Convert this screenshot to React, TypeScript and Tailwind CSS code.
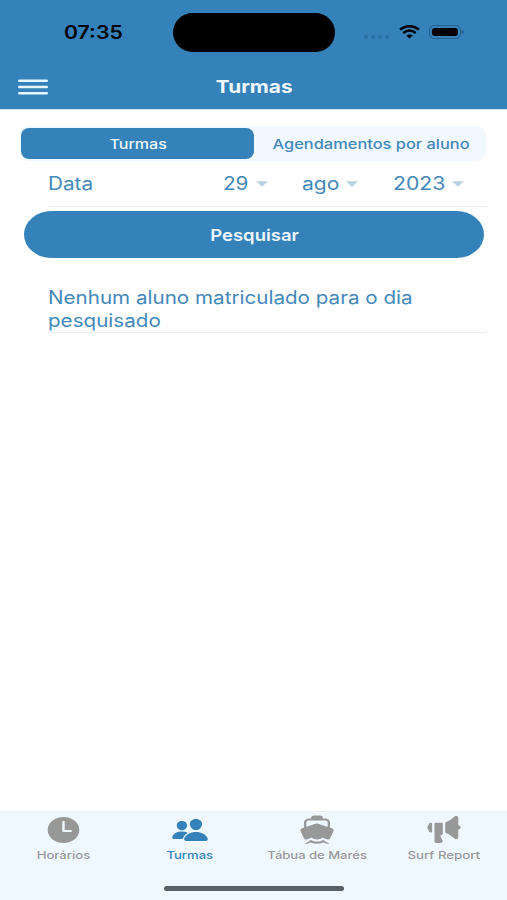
import React from "react";
import { IoBoat, IoMegaphone, IoPeople, IoTime } from "react-icons/io5";

type Tab = { label: string; icon: React.ReactNode; active?: boolean; scale: string };

const iconProps = { preserveAspectRatio: "none" };

const tabs: Tab[] = [
  { label: "Horários", scale: "scale-x-[1.25]", icon: <IoTime {...iconProps} className="h-[32px] w-[39px]" /> },
  { label: "Turmas", scale: "scale-x-[1.24]", active: true, icon: <IoPeople {...iconProps} className="h-[32px] w-[38px]" /> },
  { label: "Tábua de Marés", scale: "scale-x-[1.24]", icon: <IoBoat {...iconProps} className="ml-px h-[32px] w-[38px]" /> },
  { label: "Surf Report", scale: "scale-x-[1.26]", icon: <IoMegaphone {...iconProps} className="h-[31px] w-[38px]" /> },
];

function Caret() {
  return (
    <svg viewBox="0 0 12 6" className="h-[6px] w-[12px] shrink-0 fill-[#b8d2df]">
      <path d="M0 0.3H12L6 5.8Z" />
    </svg>
  );
}

function StatusBar() {
  return (
    <div className="flex h-[64px] items-center text-black">
      <div className="w-[173px] pt-[2px] pl-[64px] text-[18px] leading-none font-semibold">
        <span className="inline-block origin-left scale-x-[1.18]">07:35</span>
      </div>
      <div className="h-[39px] w-[162px] rounded-full bg-black" />
      <div className="flex items-center pl-[29px]">
        <div className="mt-[10px] flex gap-[3px]">
          {[0, 1, 2, 3].map((i) => (
            <i key={i} className="size-[4px] rounded-full bg-[#2a70a3]" />
          ))}
        </div>
        <svg viewBox="0 0 21 14" className="ml-[10px] h-[14px] w-[21px]" fill="none" stroke="black">
          <path d="M1 4.6Q10.500-2.400 20 4.600" strokeWidth="2.500" />
          <path d="M4.300 8Q10.500 3.200 16.700 8" strokeWidth="2.400" />
          <path d="M7.200 10.600Q10.500 8.300 13.800 10.600L10.500 13.600Z" fill="black" stroke="none" />
        </svg>
        <div className="ml-[9px] h-[14px] w-[32px] rounded-[5px] border border-[#23618e] p-[2px]">
          <div className="h-full w-full rounded-[3px] bg-black" />
        </div>
        <i className="ml-px h-[4px] w-[2px] rounded-r-full bg-[#23618e]" />
      </div>
    </div>
  );
}

export default function App() {
  return (
    <div className="flex h-[900px] w-[507px] flex-col overflow-hidden bg-white font-['Inter','Liberation_Sans',sans-serif] text-[#4488b9]">
      <header className="h-[110px] border-b border-[#c9e5f3] bg-[#3482b9]">
        <StatusBar />
        <div className="grid h-[45px] grid-cols-[48px_1fr_46px] items-center">
          <svg viewBox="0 0 30 16" className="ml-[17.500px] h-[16px] w-[30px]" stroke="#e7f5ff" strokeWidth="2.400" strokeLinecap="round">
            <path d="M1.200 1.800H28.800M1.200 8H28.800M1.200 14.200H28.800" />
          </svg>
          <h1 className="text-center text-[17.500px] leading-none font-bold text-[#eff8ff]">
            <span className="inline-block scale-x-[1.19]">Turmas</span>
          </h1>
        </div>
      </header>

      <main className="flex-1 pt-[16px]">
        <div className="mr-[21px] ml-[20px] flex h-[35px] items-center rounded-[9px] bg-[#f2f8ff] p-px text-[13.500px] font-medium">
          <div className="flex h-[31px] w-[233px] items-center justify-center rounded-[8px] bg-[#3482b9] pt-px pl-px text-[#eff8ff]">
            <span className="scale-x-[1.19]">Turmas</span>
          </div>
          <div className="flex flex-1 justify-center pt-px pl-[3px]">
            <span className="scale-x-[1.215] whitespace-nowrap">Agendamentos por aluno</span>
          </div>
        </div>

        <div className="mr-[21px] ml-[48px] flex h-[46px] items-center border-b border-[#ebedf0] text-[18px]">
          <div className="w-[175px]">
            <span className="inline-block origin-left scale-x-[1.15]">Data</span>
          </div>
          <div className="flex w-[79px] items-center">
            <span className="w-[33px]"><span className="inline-block origin-left scale-x-[1.15]">29</span></span>
            <Caret />
          </div>
          <div className="flex w-[91px] items-center">
            <span className="w-[44px]"><span className="inline-block origin-left scale-x-[1.17]">ago</span></span>
            <Caret />
          </div>
          <div className="flex items-center">
            <span className="w-[59px]"><span className="inline-block origin-left scale-x-[1.18]">2023</span></span>
            <Caret />
          </div>
        </div>

        <button className="mt-[4px] ml-[24px] flex h-[47px] w-[460px] items-center justify-center rounded-[28px/24px] bg-[#3482b9] pt-[2px] pl-px text-[16.500px] font-semibold text-[#eff8ff]">
          <span className="scale-x-[1.12]">Pesquisar</span>
        </button>

        <div className="mt-[27px] mr-[21px] ml-[48px] h-[48px] border-b border-[#ebedf0] pt-px text-[18px] leading-[23px]">
          <p className="origin-left scale-x-[1.145] whitespace-nowrap">
            Nenhum aluno matriculado para o dia
            <br />
            pesquisado
          </p>
        </div>
      </main>

      <nav className="h-[89px] border-t border-[#eceef1] bg-[#f0f8ff]">
        <ul className="grid grid-cols-4">
          {tabs.map((tab) => (
            <li key={tab.label} className={tab.active ? "flex flex-col items-center text-[#3482b9]" : "flex flex-col items-center text-[#979999]"}>
              <div className="flex h-[37px] items-center pb-[2px]">{tab.icon}</div>
              <span className={`${tab.scale} text-[10.500px] leading-[13px] font-medium whitespace-nowrap`}>{tab.label}</span>
            </li>
          ))}
        </ul>
        <div className="mx-auto mt-[24px] h-[5px] w-[180px] rounded-full bg-[#596067]" />
      </nav>
    </div>
  );
}
